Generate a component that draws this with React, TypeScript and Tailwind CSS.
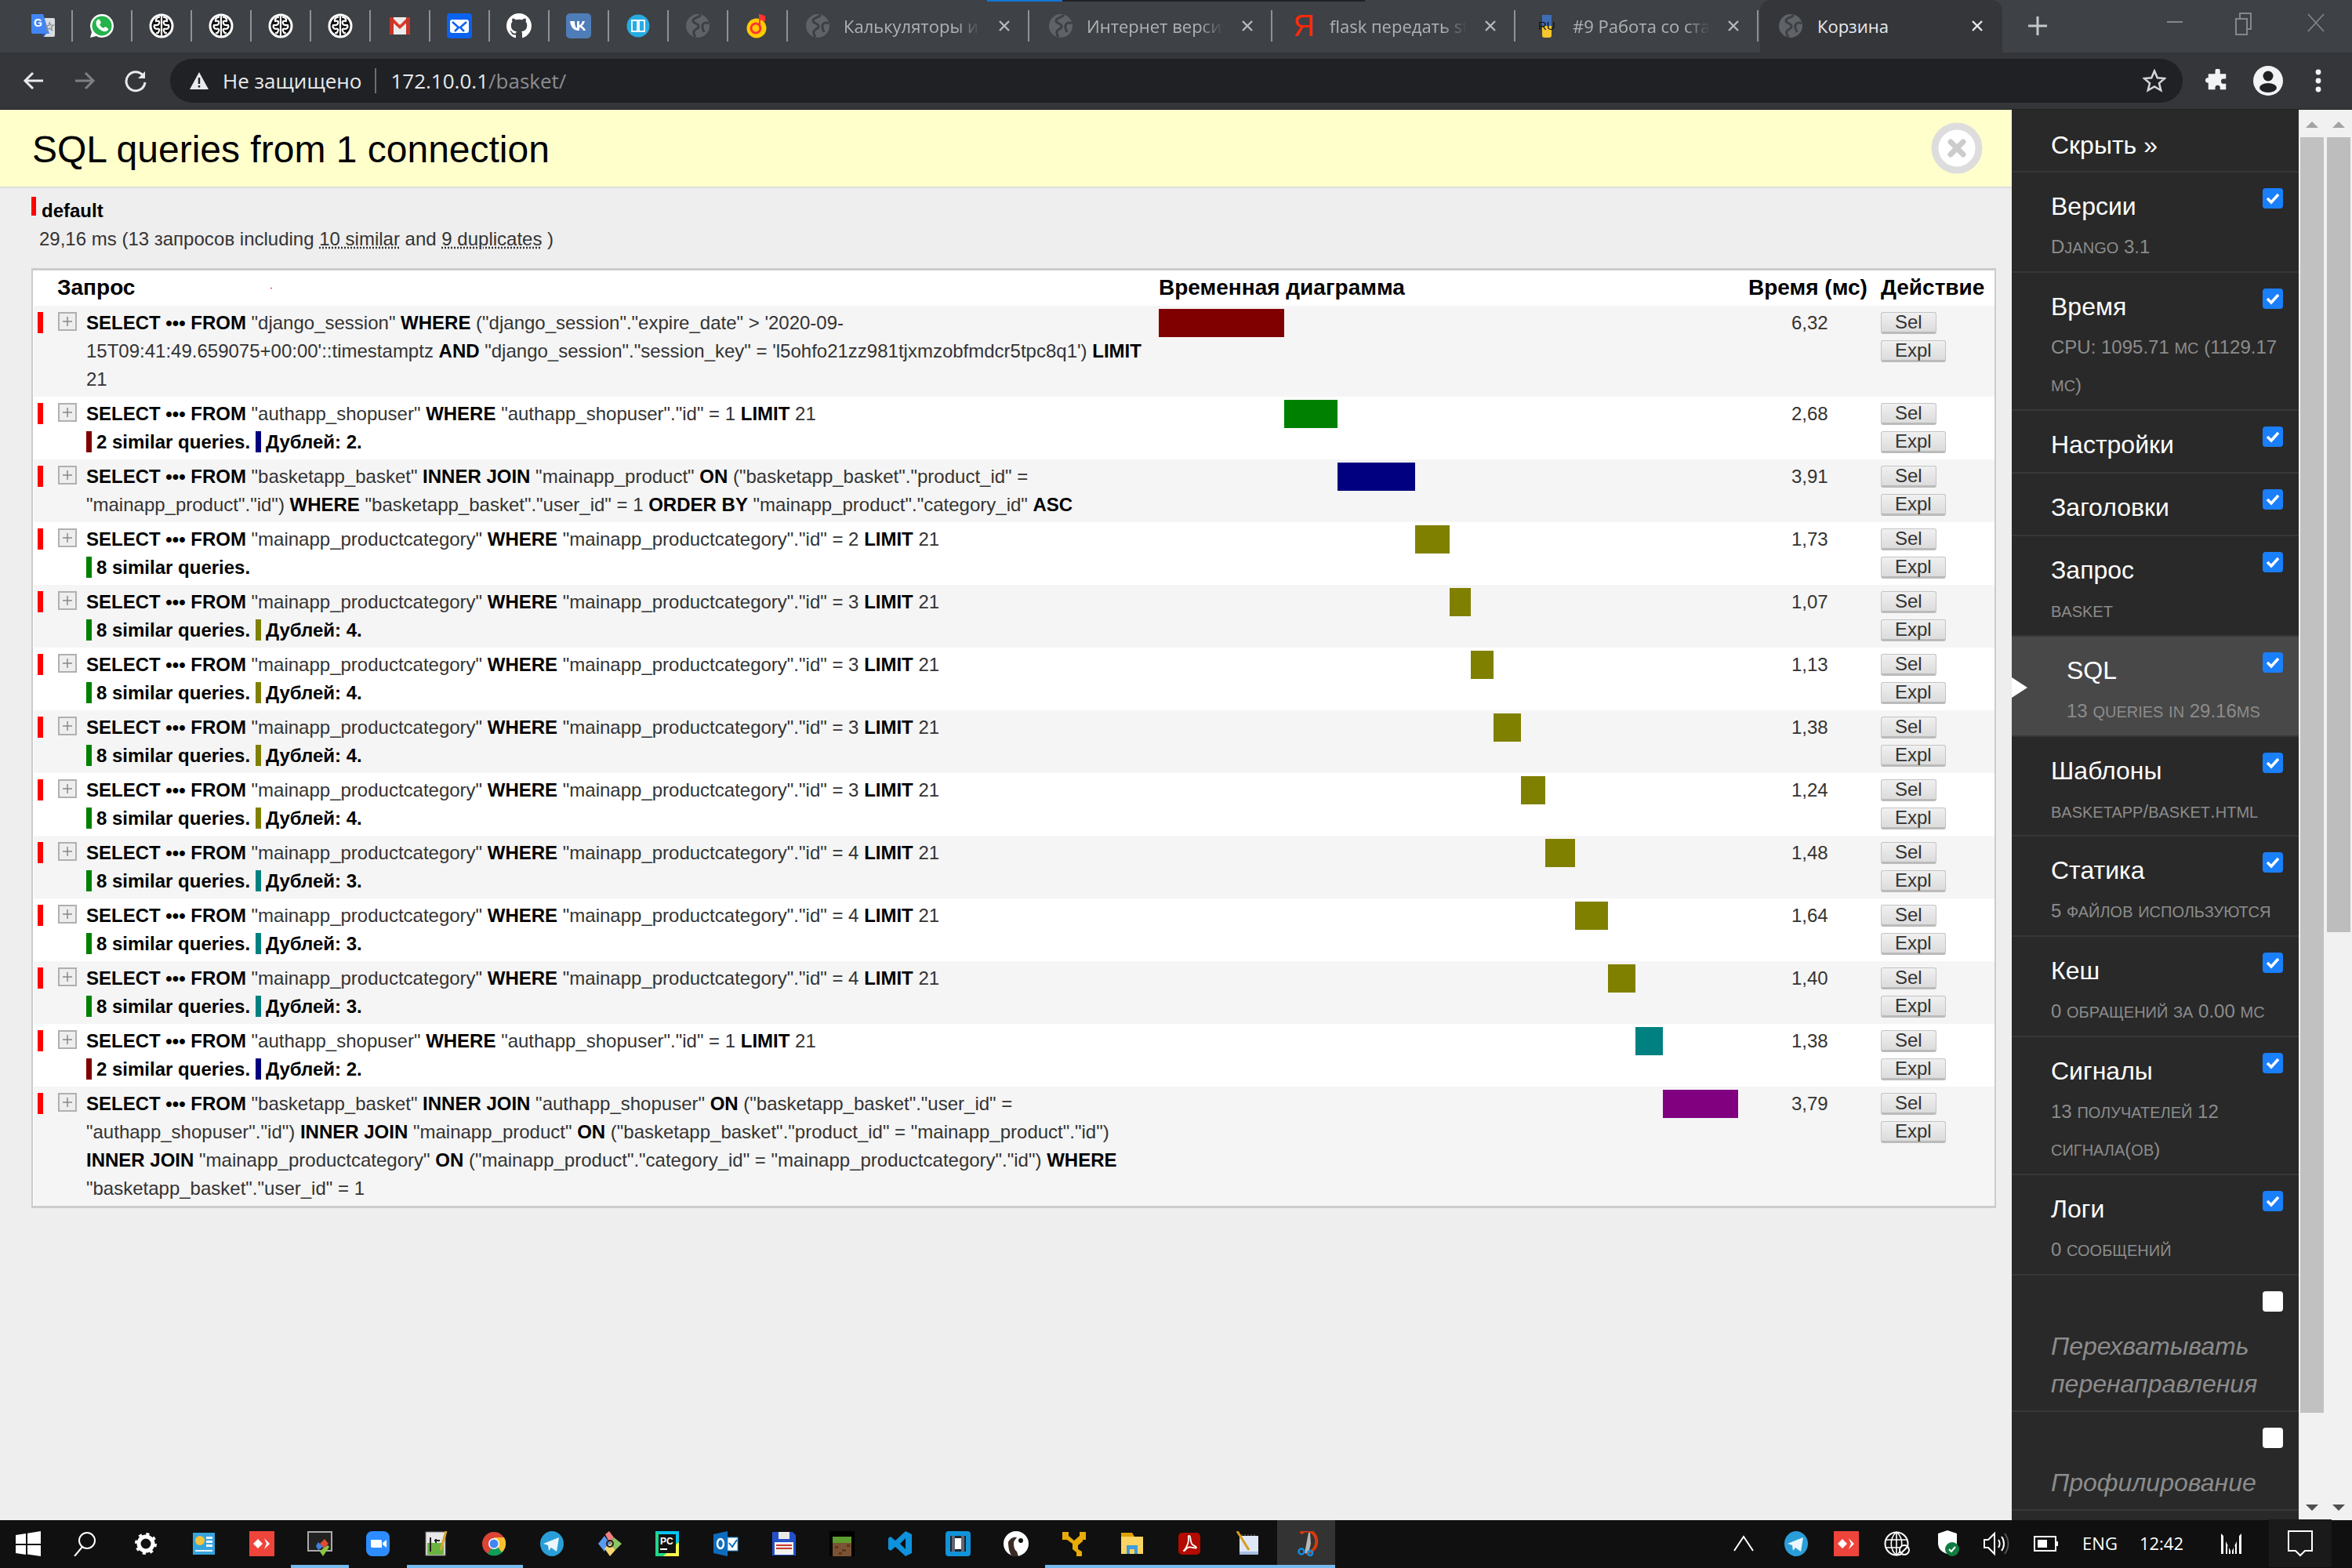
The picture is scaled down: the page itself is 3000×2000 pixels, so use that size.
import type { ReactNode } from "react";

const SANS = "font-['Liberation_Sans',Arial,sans-serif]";
const UI = "font-['Open_Sans','Noto_Sans',sans-serif]";

/* ---------- favicons ---------- */

const Globe = () => (
  <svg width="32" height="32" viewBox="0 0 32 32">
    <circle cx="16" cy="16" r="15" fill="#5f6368" />
    <path d="M20 2c-3 4-9 3-10 7s6 3 7 7-5 4-6 7 1 5 2 7M30 13c-3-2-7-1-8 2s1 6 2 9" fill="none" stroke="#3c4043" strokeWidth="3" />
  </svg>
);

const BrainHalf = () => <path d="M13 5c-3 0-5 3-4 5 3-1 5 0 4 3s-4 2-6 2c-1 2 0 5 3 5 2-1 4 0 3 2s-1 4-3 3" />;

const Brain = () => (
  <svg width="32" height="32" viewBox="0 0 32 32">
    <circle cx="16" cy="16" r="15.500" fill="#fff" />
    <circle cx="16" cy="16" r="12.500" fill="#111" />
    <g fill="none" stroke="#fff" strokeWidth="2.200" strokeLinecap="round">
      <path d="M16 4v24" />
      <BrainHalf />
      <g transform="translate(32 0) scale(-1 1)">
        <BrainHalf />
      </g>
    </g>
  </svg>
);

const Translate = () => (
  <svg width="32" height="32" viewBox="0 0 32 32">
    <path d="M13 6h17a2 2 0 0 1 2 2v20a2 2 0 0 1-2 2H18z" fill="#dadce0" />
    <path d="M2 1h15l8 25H4a2 2 0 0 1-2-2z" fill="#4285f4" />
    <path d="M16 26h5l-4 5z" fill="#2a56c6" />
    <text x="5" y="17" fontSize="14" fontWeight="700" fill="#fff" fontFamily="Liberation Sans">G</text>
    <path d="M25 11l1.500 4h4l-3 2.500 1 4-3.500-2.500-3.500 2.500 1-4-2-2h4z" fill="none" stroke="#8a8f94" strokeWidth="1.200" />
  </svg>
);

const WhatsApp = () => (
  <svg width="32" height="32" viewBox="0 0 32 32">
    <path d="M16 1a15 15 0 0 1 0 30c-3 0-5-1-7-2l-8 2 2-7c-1-3-2-5-2-8A15 15 0 0 1 16 1z" fill="#fff" />
    <circle cx="16" cy="16" r="12.500" fill="#25b24a" />
    <path d="M11 8c1-1 2 0 3 2s1 2 0 3-1 2 1 4 3 2 4 1 2-1 3 0 3 2 2 3-3 3-6 2-8-4-9-8 0-6 2-7z" fill="#fff" />
  </svg>
);

const Gmail = () => (
  <svg width="32" height="32" viewBox="0 0 32 32">
    <rect x="3" y="5" width="26" height="22" fill="#ececec" />
    <path d="M3 5h3l10 10L26 5h3v3L16 20 3 8z" fill="#d93a2b" />
    <path d="M3 5h5v22H4a1 1 0 0 1-1-1zM24 5h5v21a1 1 0 0 1-1 1h-4z" fill="#c4372a" />
  </svg>
);

const Mail = () => (
  <svg width="32" height="32" viewBox="0 0 32 32">
    <rect x="0" y="0" width="32" height="32" rx="4" fill="#0a62ef" />
    <rect x="4" y="8" width="24" height="17" rx="3" fill="#fff" />
    <path d="M7 11l8 7-5 5M25 11l-8 7 5 5" fill="none" stroke="#0a62ef" strokeWidth="2.500" />
  </svg>
);

const Github = () => (
  <svg width="32" height="32" viewBox="0 0 16 16">
    <path
      fill="#fff"
      d="M8 0C3.580 0 0 3.580 0 8c0 3.540 2.290 6.530 5.470 7.590.4.070.55-.17.55-.38 0-.19-.01-.82-.01-1.490-2.010.37-2.530-.49-2.690-.94-.09-.23-.48-.94-.82-1.130-.28-.15-.68-.52-.01-.53.63-.01 1.080.58 1.230.82.72 1.210 1.870.87 2.330.66.070-.52.28-.87.510-1.070-1.780-.2-3.640-.89-3.640-3.950 0-.87.310-1.590.820-2.150-.080-.2-.360-1.020.080-2.120 0 0 .670-.210 2.200.820.640-.180 1.320-.270 2-.270s1.360.090 2 .270c1.530-1.040 2.200-.820 2.200-.820.440 1.100.160 1.920.080 2.120.510.560.820 1.270.820 2.150 0 3.070-1.870 3.750-3.650 3.950.290.250.540.730.540 1.480 0 1.070-.010 1.930-.010 2.200 0 .210.150.460.550.380A8.010 8.010 0 0 0 16 8c0-4.420-3.580-8-8-8z"
    />
  </svg>
);

const Vk = () => (
  <svg width="32" height="32" viewBox="0 0 32 32">
    <rect width="32" height="32" rx="5" fill="#4f7db8" />
    <path d="M8 10h3c0 5 1 8 3 9v-9h3v5c2 0 3-3 4-5h3c-1 3-2 5-4 6 2 1 4 3 5 6h-3c-1-2-3-4-5-4v4h-1c-6 0-10-4-11-12z" fill="#fff" />
  </svg>
);

const Book = () => (
  <svg width="32" height="32" viewBox="0 0 32 32">
    <circle cx="16" cy="16" r="14.500" fill="#29abe2" />
    <path d="M8 9h7v14H8zM17 9h7v14h-7z" fill="none" stroke="#fff" strokeWidth="1.800" />
  </svg>
);

const YaMusic = () => (
  <svg width="32" height="32" viewBox="0 0 32 32">
    <circle cx="15" cy="19" r="12.500" fill="#fc0" />
    <circle cx="14" cy="19" r="6" fill="none" stroke="#f33" strokeWidth="3" />
    <path d="M19 2v17M19 2l6 2v5l-6-2z" fill="#f33" stroke="#f33" strokeWidth="2" />
  </svg>
);

const Python = () => (
  <svg width="32" height="32" viewBox="0 0 32 32">
    <path d="M10 2h12v14H10z" fill="#3f6db3" />
    <path d="M10 16h12v12a3 3 0 0 1-3 3h-6a3 3 0 0 1-3-3z" fill="#f8c62f" />
    <text x="5" y="21" fontSize="15" fill="#111" fontFamily="Liberation Sans">RU</text>
  </svg>
);

const pinned = [
  <Translate />,
  <WhatsApp />,
  <Brain />,
  <Brain />,
  <Brain />,
  <Brain />,
  <Gmail />,
  <Mail />,
  <Github />,
  <Vk />,
  <Book />,
  <Globe />,
  <YaMusic />,
];

const tabs: { icon: ReactNode; title: string }[] = [
  { icon: <Globe />, title: "Калькуляторы и конвертеры" },
  { icon: <Globe />, title: "Интернет версия приложения" },
  { icon: <span className={`${SANS} text-[38px] leading-none text-[#fc2a0a]`}>Я</span>, title: "flask передать static файл" },
  { icon: <Python />, title: "#9 Работа со статикой" },
];

const TabClose = ({ color = "#b6b9bc" }: { color?: string }) => (
  <svg width="16" height="16" viewBox="0 0 16 16" className="shrink-0">
    <path d="M2 2l12 12M14 2L2 14" stroke={color} strokeWidth="2.400" />
  </svg>
);

function TabStrip() {
  return (
    <div className={`relative flex h-[67px] items-stretch bg-[#3e4145] pl-[17px] ${UI}`}>
      <div className="absolute left-[1259px] top-0 h-[2px] w-[96px] bg-[#1177d6]" />
      <div className="absolute left-[1355px] top-0 h-[2px] w-[386px] bg-[#212225]" />
      {pinned.map((icon, i) => (
        <div key={i} className="flex w-[76px] items-center justify-center pb-[2px]">
          <div className="flex h-[32px] w-[32px] items-center justify-center">{icon}</div>
          <div className="relative left-[21px] h-[40px] w-[2px] shrink-0 bg-[#8f9295]" />
        </div>
      ))}
      {tabs.map((t) => (
        <div key={t.title} className="flex w-[310px] items-center border-r-2 border-r-transparent pb-[2px] pl-[22px]">
          <div className="flex h-[32px] w-[32px] shrink-0 items-center justify-center">{t.icon}</div>
          <span className="ml-[17px] w-[176px] overflow-hidden whitespace-nowrap text-[22px] leading-[30px] text-[#b0b3b6] [mask-image:linear-gradient(to_right,black_82%,transparent)]">
            {t.title}
          </span>
          <div className="ml-[22px] flex h-[16px] items-center">
            <TabClose />
          </div>
          <div className="ml-[22px] h-[40px] w-[2px] shrink-0 bg-[#8f9295]" />
        </div>
      ))}
      <div className="flex w-[309px] items-center rounded-t-[14px] bg-[#35363a] pb-[2px] pl-[23px]">
        <Globe />
        <span className="ml-[18px] w-[196px] text-[22px] leading-[30px] text-[#e8eaed]">Корзина</span>
        <TabClose color="#e8eaed" />
      </div>
      <svg width="26" height="26" viewBox="0 0 26 26" className="ml-[32px] mt-[20px]">
        <path d="M13 1v24M1 13h24" stroke="#c4c7c9" strokeWidth="3" />
      </svg>
      <div className="ml-auto flex items-start">
        <svg width="24" height="24" viewBox="0 0 24 24" className="mr-[64px] mt-[16px]">
          <path d="M2 12h20" stroke="#85888b" strokeWidth="2" />
        </svg>
        <svg width="24" height="30" viewBox="0 0 24 30" className="mr-[68px] mt-[15px]">
          <path d="M2 9h14v20H2zM7 9V2h14v20h-5" fill="none" stroke="#85888b" strokeWidth="2" />
        </svg>
        <svg width="24" height="24" viewBox="0 0 24 24" className="mr-[34px] mt-[17px]">
          <path d="M2 1l20 22M22 1L2 23" stroke="#85888b" strokeWidth="1.600" />
        </svg>
      </div>
    </div>
  );
}

function Toolbar() {
  return (
    <div className="flex h-[72px] items-center bg-[#35363a]">
      <svg width="28" height="28" viewBox="0 0 28 28" className="ml-[29px]">
        <path d="M26 14H4M13 4L3 14l10 10" fill="none" stroke="#e8eaed" strokeWidth="3" />
      </svg>
      <svg width="28" height="28" viewBox="0 0 28 28" className="ml-[37px]">
        <path d="M2 14h22M15 4l10 10-10 10" fill="none" stroke="#7d8083" strokeWidth="3" />
      </svg>
      <svg width="30" height="30" viewBox="0 0 30 30" className="ml-[36px]">
        <path d="M25 9A12 12 0 1 0 27 17" fill="none" stroke="#e8eaed" strokeWidth="3" />
        <path d="M27 3v9h-9z" fill="#e8eaed" />
      </svg>
      <div className={`ml-[29px] flex h-[56px] w-[2567px] items-center rounded-full bg-[#202124] pl-[25px] ${UI}`}>
        <svg width="24" height="24" viewBox="0 0 24 24">
          <path d="M12 1l12 22H0z" fill="#e8eaed" />
          <path d="M10.800 8h2.400v8h-2.400zM10.800 18h2.400v2.400h-2.400z" fill="#202124" />
        </svg>
        <span className="ml-[18px] text-[26px] text-[#e8eaed]">Не защищено</span>
        <span className="ml-[17px] h-[32px] w-[2px] bg-[#6b6e72]" />
        <span className="ml-[18px] text-[26px] text-[#e8eaed]">
          172.10.0.1<span className="text-[#8a8d91]">/basket/</span>
        </span>
        <svg width="30" height="30" viewBox="0 0 24 24" className="ml-auto mr-[21px]">
          <path d="M12 2l3 7 7.500.6-5.700 4.900 1.800 7.300L12 17.900l-6.600 3.900 1.800-7.300L1.500 9.600 9 9z" fill="none" stroke="#d4d6d8" strokeWidth="2" />
        </svg>
      </div>
      <svg width="30" height="30" viewBox="0 0 24 24" className="ml-[29px]">
        <path d="M10 2a2.500 2.500 0 0 1 5 0v3h6v5h-2.500a2.500 2.500 0 0 0 0 5H21v6h-6v-2a2.500 2.500 0 0 0-5 0v2H3v-7h-.5a2.500 2.500 0 0 1 0-5H3V5h7z" fill="#f1f3f4" />
      </svg>
      <svg width="38" height="38" viewBox="0 0 38 38" className="ml-[31px]">
        <circle cx="19" cy="19" r="19" fill="#f1f3f4" />
        <circle cx="19" cy="13" r="6.500" fill="#202124" />
        <ellipse cx="19" cy="28" rx="11" ry="6" fill="#202124" />
      </svg>
      <svg width="8" height="30" viewBox="0 0 8 30" className="ml-[41px]">
        <circle cx="4" cy="4" r="3.400" fill="#f1f3f4" />
        <circle cx="4" cy="15" r="3.400" fill="#f1f3f4" />
        <circle cx="4" cy="26" r="3.400" fill="#f1f3f4" />
      </svg>
    </div>
  );
}

/* ---------- sql panel ---------- */

type Note = { text: string; color: string };
type Query = { sql: string; ms: string; w: number; color: string; notes?: Note[] };

const similar2: Note = { text: "2 similar queries.", color: "#800000" };
const dup2: Note = { text: "Дублей: 2.", color: "#000080" };
const similar8: Note = { text: "8 similar queries.", color: "#008000" };
const dup4: Note = { text: "Дублей: 4.", color: "#808000" };
const dup3: Note = { text: "Дублей: 3.", color: "#008080" };

const cat = (id: number) =>
  `SELECT ••• FROM "mainapp_productcategory" WHERE "mainapp_productcategory"."id" = ${id} LIMIT 21`;
const user = `SELECT ••• FROM "authapp_shopuser" WHERE "authapp_shopuser"."id" = 1 LIMIT 21`;

const queries: Query[] = [
  {
    sql: `SELECT ••• FROM "django_session" WHERE ("django_session"."expire_date" > '2020-09-15T09:41:49.659075+00:00'::timestamptz AND "django_session"."session_key" = 'l5ohfo21zz981tjxmzobfmdcr5tpc8q1') LIMIT 21`,
    ms: "6,32",
    w: 160,
    color: "#800000",
  },
  { sql: user, ms: "2,68", w: 68, color: "#008000", notes: [similar2, dup2] },
  {
    sql: `SELECT ••• FROM "basketapp_basket" INNER JOIN "mainapp_product" ON ("basketapp_basket"."product_id" = "mainapp_product"."id") WHERE "basketapp_basket"."user_id" = 1 ORDER BY "mainapp_product"."category_id" ASC`,
    ms: "3,91",
    w: 99,
    color: "#000080",
  },
  { sql: cat(2), ms: "1,73", w: 44, color: "#808000", notes: [similar8] },
  { sql: cat(3), ms: "1,07", w: 27, color: "#808000", notes: [similar8, dup4] },
  { sql: cat(3), ms: "1,13", w: 29, color: "#808000", notes: [similar8, dup4] },
  { sql: cat(3), ms: "1,38", w: 35, color: "#808000", notes: [similar8, dup4] },
  { sql: cat(3), ms: "1,24", w: 31, color: "#808000", notes: [similar8, dup4] },
  { sql: cat(4), ms: "1,48", w: 38, color: "#808000", notes: [similar8, dup3] },
  { sql: cat(4), ms: "1,64", w: 42, color: "#808000", notes: [similar8, dup3] },
  { sql: cat(4), ms: "1,40", w: 35, color: "#808000", notes: [similar8, dup3] },
  { sql: user, ms: "1,38", w: 35, color: "#008080", notes: [similar2, dup2] },
  {
    sql: `SELECT ••• FROM "basketapp_basket" INNER JOIN "authapp_shopuser" ON ("basketapp_basket"."user_id" = "authapp_shopuser"."id") INNER JOIN "mainapp_product" ON ("basketapp_basket"."product_id" = "mainapp_product"."id") INNER JOIN "mainapp_productcategory" ON ("mainapp_product"."category_id" = "mainapp_productcategory"."id") WHERE "basketapp_basket"."user_id" = 1`,
    ms: "3,79",
    w: 96,
    color: "#800080",
  },
];

const KEYWORDS = /(\bSELECT\b|•••|\bFROM\b|\bWHERE\b|\bINNER JOIN\b|\bON\b|\bLIMIT\b|\bAND\b|\bORDER BY\b|\bASC\b)/;

function Sql({ text }: { text: string }) {
  return (
    <>
      {text.split(KEYWORDS).map((part, i) =>
        i % 2 ? (
          <b key={i} className="font-bold text-black">
            {part}
          </b>
        ) : (
          part
        ),
      )}
    </>
  );
}

const BTN =
  "block h-[28px] rounded-[3px] border border-[#c4c4c4] border-b-[3px] border-b-[#bbbbbb] bg-gradient-to-b from-[#f0f0f0] to-[#dcdcdc] px-[17px] text-[24px] leading-[22px] text-[#333]";

function QueryRow({ q, i, left }: { q: Query; i: number; left: number }) {
  return (
    <div className={`flex text-[24px] leading-[36px] text-[#333] ${i % 2 ? "bg-white" : "bg-[#f5f5f5]"}`}>
      <div className="flex w-[67px] shrink-0 items-start pl-[5px] pt-[8px]">
        <span className="h-[27px] w-[7px] bg-[#f00]" />
        <span className="ml-[19px] flex h-[24px] w-[24px] items-center justify-center border-2 border-[#b0b0b0] bg-[#eee]">
          <svg width="14" height="14" viewBox="0 0 14 14">
            <path d="M7 1v12M1 7h12" stroke="#888" strokeWidth="1.500" />
          </svg>
        </span>
      </div>
      <div className="w-[1368px] shrink-0 py-[4px] pr-[12px]">
        <div>
          <Sql text={q.sql} />
        </div>
        {q.notes && (
          <div className="flex h-[36px] items-center pb-[2px] font-bold text-black">
            {q.notes.map((n) => (
              <span
                key={n.text}
                className="mr-[7px] border-l-[7px] pl-[6px] leading-[27px]"
                style={{ borderLeftColor: n.color }}
              >
                {n.text}
              </span>
            ))}
          </div>
        )}
      </div>
      <div className="w-[752px] shrink-0 pt-[4px]">
        <div className="h-[36px]" style={{ marginLeft: left, width: q.w, backgroundColor: q.color }} />
      </div>
      <div className="w-[169px] shrink-0 pl-[55px] pt-[4px]">{q.ms}</div>
      <div className="flex flex-col items-start gap-[8px] pb-[4px] pt-[8px]">
        <button className={BTN}>Sel</button>
        <button className={BTN}>Expl</button>
      </div>
    </div>
  );
}

function SqlPanel() {
  let left = 0;
  return (
    <div className={`h-full min-w-0 flex-1 bg-[#eee] ${SANS}`}>
      <div className="flex h-[100px] items-center justify-between border-b-2 border-b-[#ddd] bg-[#ffc] pl-[41px] pr-[37px]">
        <h1 className="pt-[3px] text-[48px] font-normal leading-none text-black">SQL queries from 1 connection</h1>
        <svg width="66" height="66" viewBox="0 0 66 66">
          <circle cx="33" cy="33" r="28" fill="#fff" stroke="#ddd" strokeWidth="9" />
          <path d="M25 25l16 16M41 25L25 41" stroke="#ccc" strokeWidth="7" strokeLinecap="round" />
        </svg>
      </div>
      <div className="pl-[40px] pr-[20px]">
        <div className="mt-[11px] flex h-[24px] items-center">
          <span className="h-[24px] w-[6px] bg-[#f00]" />
          <b className="relative top-[6px] ml-[7px] text-[24px] font-bold text-black">default</b>
        </div>
        <p className="mt-[12px] pl-[10px] text-[24px] leading-[36px] text-[#333]">
          29,16 ms (13 запросов including{" "}
          <span className="underline decoration-dotted">10 similar</span> and{" "}
          <span className="underline decoration-dotted">9 duplicates</span> )
        </p>
        <div className="mt-[19px] w-[2506px] border-2 border-t-[3px] border-[#ccc] border-b-[3px] bg-white pl-[1px]">
          <div className="relative flex h-[45px] items-center pb-[2px] text-[28px] font-bold text-black">
            <span className="w-[1435px] pl-[30px]">Запрос</span>
            <span className="w-[752px]">Временная диаграмма</span>
            <span className="w-[169px]">Время (мс)</span>
            <span>Действие</span>
            <span className="absolute left-[302px] top-[22px] h-[1px] w-[2px] bg-[#f00]" />
          </div>
          {queries.map((q, i) => {
            const row = <QueryRow key={i} q={q} i={i} left={left} />;
            left += q.w;
            return row;
          })}
        </div>
      </div>
    </div>
  );
}

/* ---------- debug toolbar side panel ---------- */

const Check = ({ on = true }: { on?: boolean }) => (
  <svg width="26" height="26" viewBox="0 0 26 26" className="absolute right-[20px] top-[20px]">
    <rect width="26" height="26" rx="4" fill={on ? "#1a7ffb" : "#fff"} />
    {on && <path d="M6 13l5 5 9-10" fill="none" stroke="#fff" strokeWidth="3.500" />}
  </svg>
);

type Item = { title: string; sub?: string; active?: boolean; off?: boolean };

const items: Item[] = [
  { title: "Версии", sub: "Django 3.1" },
  { title: "Время", sub: "CPU: 1095.71 мс (1129.17 мс)" },
  { title: "Настройки" },
  { title: "Заголовки" },
  { title: "Запрос", sub: "basket" },
  { title: "SQL", sub: "13 queries in 29.16ms", active: true },
  { title: "Шаблоны", sub: "basketapp/basket.html" },
  { title: "Статика", sub: "5 файлов используются" },
  { title: "Кеш", sub: "0 обращений за 0.00 мс" },
  { title: "Сигналы", sub: "13 получателей 12 сигнала(ов)" },
  { title: "Логи", sub: "0 сообщений" },
  { title: "Перехватывать перенаправления", off: true },
  { title: "Профилирование", off: true },
];

// small caps the way the panel draws them: lower-case runs as smaller capitals
function SmallCaps({ text }: { text: string }) {
  return (
    <>
      {text.split(/([a-zа-яё]+)/).map((part, i) =>
        i % 2 ? (
          <span key={i} className="text-[20px] uppercase leading-none">
            {part}
          </span>
        ) : (
          part
        ),
      )}
    </>
  );
}

function SideItem({ item }: { item: Item }) {
  return (
    <div
      className={`relative border-b-2 border-b-[#373737] pr-[10px] ${item.active ? "bg-[#484848] pl-[70px]" : "pl-[50px]"}`}
    >
      {item.active && (
        <span className="absolute left-0 top-[52px] h-0 w-0 border-y-[13px] border-l-[20px] border-y-transparent border-l-white" />
      )}
      <Check on={!item.off} />
      {item.off ? (
        <div className="pb-[10px] pr-[20px] pt-[66px] text-[32px] italic leading-[48px] text-[#8c8c8c]">{item.title}</div>
      ) : (
        <>
          <div className={`pt-[22px] text-[32px] leading-[42px] text-white ${item.sub ? "" : "pb-[14px]"}`}>
            {item.title}
          </div>
          {item.sub && (
            <div className="mt-[7px] pb-[6.250px] text-[24px] leading-[48.500px] text-[#8c8c8c]">
              <SmallCaps text={item.sub} />
            </div>
          )}
        </>
      )}
    </div>
  );
}

function Scrollbar({ thumb, color }: { thumb: number; color: string }) {
  return (
    <div className="flex w-[34px] flex-col items-center bg-[#f1f1f1] px-[2px]">
      <svg width="18" height="9" viewBox="0 0 18 9" className="mt-[14px]">
        <path d="M9 1l8 8H1z" fill="#a3a3a3" />
      </svg>
      <div className={`mt-[12px] w-[30px] ${color}`} style={{ height: thumb }} />
      <svg width="18" height="9" viewBox="0 0 18 9" className="mb-[12px] mt-auto">
        <path d="M9 9l8-8H1z" fill="#505050" />
      </svg>
    </div>
  );
}

function SidePanel() {
  return (
    <div className={`flex h-full w-[366px] shrink-0 flex-col overflow-hidden bg-[#292929] ${SANS}`}>
      <div className="h-[80px] shrink-0 border-b-2 border-b-[#373737] pl-[50px] pt-[24px] text-[32px] leading-[42px] text-white">
        Скрыть »
      </div>
      {items.map((item) => (
        <SideItem key={item.title} item={item} />
      ))}
    </div>
  );
}

/* ---------- windows taskbar ---------- */

const Box = ({ children, size = 32 }: { children: ReactNode; size?: number }) => (
  <svg width={size} height={size} viewBox="0 0 32 32">
    {children}
  </svg>
);

const AnyDesk = () => (
  <Box>
    <rect width="32" height="32" fill="#ef443b" />
    <path d="M11 10l6 6-6 6-6-6zM19 9l7 7-7 7 3-7z" fill="#fff" />
  </Box>
);

const Telegram = () => (
  <Box>
    <ellipse cx="16" cy="16" rx="15" ry="16" fill="#2a9ed8" />
    <path d="M5 16l20-8-3 18-7-5-3 4-1-7z" fill="#fff" opacity=".9" />
  </Box>
);

const taskIcons: ReactNode[] = [
  <Box>
    <path d="M0 5l13-2v13H0zM15 2.700L32 0v16H15zM0 18h13v12L0 28zM15 18h17v14l-17-2.500z" fill="#fff" />
  </Box>,
  <Box>
    <circle cx="19" cy="12" r="10" fill="none" stroke="#fff" strokeWidth="2" />
    <path d="M13 20L3 32" stroke="#fff" strokeWidth="2" />
  </Box>,
  <Box>
    <circle cx="16" cy="16" r="9" fill="none" stroke="#fff" strokeWidth="5" />
    <circle cx="16" cy="16" r="12" fill="none" stroke="#fff" strokeWidth="4" strokeDasharray="4 5.420" />
  </Box>,
  <Box>
    <rect x="2" y="2" width="28" height="28" fill="#36a5dc" />
    <circle cx="11" cy="12" r="6" fill="#f4c33d" />
    <path d="M19 7h8v3h-8zM19 12h8v3h-8zM19 17h8v3h-8zM5 24h22v2H5z" fill="#e8f4fb" />
  </Box>,
  <AnyDesk />,
  <Box>
    <rect x="1" y="1" width="30" height="24" fill="#222" stroke="#aaa" strokeWidth="2" />
    <path d="M22 10l5 6-6 6-5-6z" fill="#e04b32" />
    <path d="M14 14l6 6-6 4-3-5z" fill="#3f7fe0" />
    <path d="M20 22l6-4 2 2-8 12-4-6z" fill="#8dc640" />
  </Box>,
  <Box>
    <rect x="1" width="30" height="32" rx="8" fill="#2d8cff" />
    <path d="M7 11h12a2 2 0 0 1 2 2v8H9a2 2 0 0 1-2-2zM22 15l5-4v10l-5-4z" fill="#fff" />
  </Box>,
  <Box>
    <rect x="3" y="1" width="25" height="30" fill="#e8e8e8" stroke="#777" />
    <rect x="5" y="15" width="21" height="15" fill="#6cb33f" />
    <path d="M9 8v18M14 12h7M16 10v5" stroke="#222" strokeWidth="2" />
    <path d="M29 0l-7 24" stroke="#d4a72c" strokeWidth="3" />
  </Box>,
  <Box>
    <circle cx="16" cy="16" r="15" fill="#db4437" />
    <path d="M16 16L29 24A15 15 0 0 1 8 29z" fill="#0f9d58" />
    <path d="M16 8h13a15 15 0 0 1-3 19l-8-11z" fill="#fbc02d" />
    <circle cx="16" cy="16" r="7" fill="#fff" />
    <circle cx="16" cy="16" r="5.500" fill="#4285f4" />
  </Box>,
  <Telegram />,
  <Box>
    <path d="M1 16L9 6l7 10-7 10z" fill="#5a9bf0" />
    <path d="M10 4l5-4 6 8-5 8z" fill="#f07f7f" />
    <path d="M16 16l5-8 10 8-8 8z" fill="#8cc665" />
    <path d="M9 22l7-6 7 8-7 8z" fill="#f8d771" />
    <circle cx="16" cy="16" r="4" fill="none" stroke="#222" strokeWidth="2" />
  </Box>,
  <Box>
    <rect width="30" height="32" fill="#21d789" />
    <path d="M0 0h30v16z" fill="#07c3f2" />
    <path d="M30 14v18H10z" fill="#fcf84a" />
    <rect x="4" y="4" width="22" height="24" fill="#111" />
    <text x="6" y="17" fontSize="12" fontWeight="700" fill="#fff" fontFamily="Liberation Sans">PC</text>
    <rect x="6" y="22" width="9" height="2" fill="#fff" />
  </Box>,
  <Box>
    <path d="M0 4l18-4v32L0 28z" fill="#0f6cbd" />
    <rect x="18" y="8" width="13" height="17" fill="#fff" stroke="#1f8ee0" />
    <ellipse cx="9" cy="16" rx="4" ry="6" fill="none" stroke="#fff" strokeWidth="2.500" />
    <path d="M20 15l4 5 6-9" fill="none" stroke="#0f6cbd" strokeWidth="2" />
  </Box>,
  <Box>
    <path d="M1 1h26l4 4v26H1z" fill="#2450c9" />
    <rect x="4" y="14" width="24" height="16" fill="#f2f2f2" />
    <path d="M6 18h20M6 22h20" stroke="#c9382c" strokeWidth="2" />
    <rect x="9" y="1" width="14" height="9" fill="#e8e8e8" />
  </Box>,
  <Box>
    <rect width="32" height="32" fill="#000" />
    <rect x="4" y="7" width="24" height="25" fill="#7b5233" />
    <rect x="4" y="7" width="24" height="8" fill="#5d9c2e" />
    <path d="M7 19h4v3H7zM16 23h5v3h-5zM12 27h4v3h-4zM22 17h4v3h-4z" fill="#59381f" />
  </Box>,
  <Box>
    <path d="M23 0l8 4v24l-8 4L10 20l-6 5-3-2V9l3-2 6 5zM23 9l-7 7 7 7z" fill="#0e92dd" fillRule="evenodd" />
  </Box>,
  <Box>
    <rect width="32" height="32" rx="4" fill="#1293d8" />
    <path d="M6 6h20v20H6z" fill="#1c2530" />
    <rect x="12" y="9" width="8" height="14" fill="#fff" />
    <rect x="8" y="6" width="4" height="20" fill="#fff" opacity=".3" />
    <rect x="20" y="6" width="4" height="20" fill="#fff" opacity=".3" />
  </Box>,
  <Box>
    <circle cx="16" cy="16" r="16" fill="#fff" />
    <path d="M6 14c2-4 6-7 11-6-2 3-4 4-4 8s1 8 4 10l2 6h-8c-3-3-5-10-5-18z" fill="#3a2b24" />
    <circle cx="22" cy="12" r="3" fill="#111" />
  </Box>,
  <Box>
    <path d="M1 1h8v5l7 6 7-6V1h8v10h-4v2l-6 5v5l5 3v6h-7v-5l-5-4V16l-7-5H1z" fill="#e8ab07" />
  </Box>,
  <Box>
    <path d="M2 2h14l3 5H2z" fill="#e0a100" />
    <path d="M2 7h28v22H2z" fill="#fcd462" />
    <path d="M9 18h14v11h-4v-6h-6v6H9z" fill="#3e9bdc" />
  </Box>,
  <Box>
    <rect x="1" y="2" width="28" height="28" rx="5" fill="#b30b00" />
    <path d="M8 25c3-3 6-10 6-14 0-4-1-5 1-5s1 7 3 10 6 3 6 5-8-2-11 0-4 5-5 4z" fill="none" stroke="#fff" strokeWidth="1.800" />
  </Box>,
  <Box>
    <rect x="5" y="6" width="24" height="24" fill="#dfe7f6" />
    <path d="M5 26h24v4H5z" fill="#a9bee0" />
    <path d="M8 6v-2M12 6V4M16 6V4M20 6V4M24 6V4" stroke="#555" strokeWidth="1.500" />
    <path d="M2 0l15 24" stroke="#d89b1c" strokeWidth="3" />
  </Box>,
  <Box>
    <path d="M9 3a12 14 0 1 1 6 24" fill="none" stroke="#d63b0e" strokeWidth="4" />
    <path d="M14 28L19 2h2l1 14-3 12z" fill="#b8b8b8" />
    <circle cx="10" cy="26" r="3.500" fill="none" stroke="#0f8fe2" strokeWidth="2.500" />
    <circle cx="21" cy="28" r="3" fill="none" stroke="#0f8fe2" strokeWidth="2.500" />
  </Box>,
];

// icons with a running-app underline in the taskbar
const runningIcons = new Set([5, 7, 8, 18, 19, 20, 21, 22]);

function Taskbar() {
  return (
    <div className={`flex h-[61px] shrink-0 bg-[#101010] pl-[1px] ${UI}`}>
      {taskIcons.map((icon, i) => (
        <div
          key={i}
          className={`flex w-[74px] items-center justify-center border-b-4 pt-[2px] ${
            runningIcons.has(i) ? "border-b-[#76b9ed]" : "border-b-transparent"
          } ${i === 22 ? "bg-[#333]" : ""} ${i === 0 ? "pr-[4px]" : ""} ${i === 1 ? "pr-[8px]" : ""}`}
        >
          {icon}
        </div>
      ))}
      <div className="ml-auto flex items-center pb-[2px]">
        <svg width="26" height="26" viewBox="0 0 26 26" className="mr-[38px]">
          <path d="M1 22L13 4l12 18" fill="none" stroke="#fff" strokeWidth="2" />
        </svg>
        <Telegram />
        <span className="ml-[32px]">
          <AnyDesk />
        </span>
        <svg width="34" height="32" viewBox="0 0 34 32" className="ml-[32px]">
          <circle cx="16" cy="16" r="14.500" fill="none" stroke="#fff" strokeWidth="2" />
          <path d="M16 1v30M2 11h28M2 21h28M16 1c-9 8-9 22 0 30M16 1c9 8 9 22 0 30" fill="none" stroke="#fff" strokeWidth="1.600" />
          <circle cx="26" cy="24" r="6" fill="#101010" stroke="#fff" strokeWidth="2" />
          <path d="M22 28l8-8" stroke="#fff" strokeWidth="2" />
        </svg>
        <svg width="30" height="34" viewBox="0 0 30 34" className="ml-[32px]">
          <path d="M15 0l12 4v14H15zM3 4l12-4v16H3zM3 16h12v14C8 28 3 24 3 16z" fill="#fff" />
          <circle cx="21" cy="24" r="9" fill="#107c41" />
          <path d="M17 24l3 3 5-6" fill="none" stroke="#fff" strokeWidth="2" />
        </svg>
        <svg width="34" height="32" viewBox="0 0 34 32" className="ml-[30px]">
          <path d="M2 11h5l8-8v26l-8-8H2z" fill="none" stroke="#fff" strokeWidth="2" />
          <path d="M20 11c2 3 2 7 0 10M24 7c4 5 4 13 0 18" fill="none" stroke="#fff" strokeWidth="2" />
          <path d="M28 3c6 8 6 18 0 26" fill="none" stroke="#555" strokeWidth="2" />
        </svg>
        <svg width="32" height="20" viewBox="0 0 32 20" className="ml-[31px]">
          <rect x="1" y="1" width="27" height="18" fill="none" stroke="#fff" strokeWidth="2" />
          <rect x="5" y="5" width="12" height="10" fill="#fff" />
          <rect x="29" y="7" width="2" height="6" fill="#fff" />
        </svg>
        <span className="ml-[30px] text-[22px] text-white">ENG</span>
        <span className="ml-[28px] text-[22px] text-white">12:42</span>
        <svg width="30" height="26" viewBox="0 0 30 26" className="ml-[46px]">
          <path d="M2 0l3 3v23H2zM28 0l-3 3v23h3zM8 10l6 12v4h-2V18l-2-3v11H8zM22 10l-6 12v4h2V18l2-3v11h2z" fill="#fff" />
        </svg>
        <div className="ml-[33px] mr-[26px] flex h-[61px] w-[80px] items-center justify-center bg-[#1a1a1a]">
          <svg width="32" height="34" viewBox="0 0 32 34">
            <path d="M1 1h30v25H22l-6 6-6-6H1z" fill="none" stroke="#fff" strokeWidth="2" />
          </svg>
        </div>
      </div>
    </div>
  );
}

export default function App() {
  return (
    <div className="flex h-[2000px] w-[3000px] flex-col overflow-hidden bg-[#eee]">
      <TabStrip />
      <Toolbar />
      <div className="flex min-h-0 flex-1 border-t border-t-[#222]">
        <SqlPanel />
        <SidePanel />
        <Scrollbar thumb={1627} color="bg-[#c1c1c1]" />
        <Scrollbar thumb={1014} color="bg-[#bdbdbd]" />
      </div>
      <Taskbar />
    </div>
  );
}
